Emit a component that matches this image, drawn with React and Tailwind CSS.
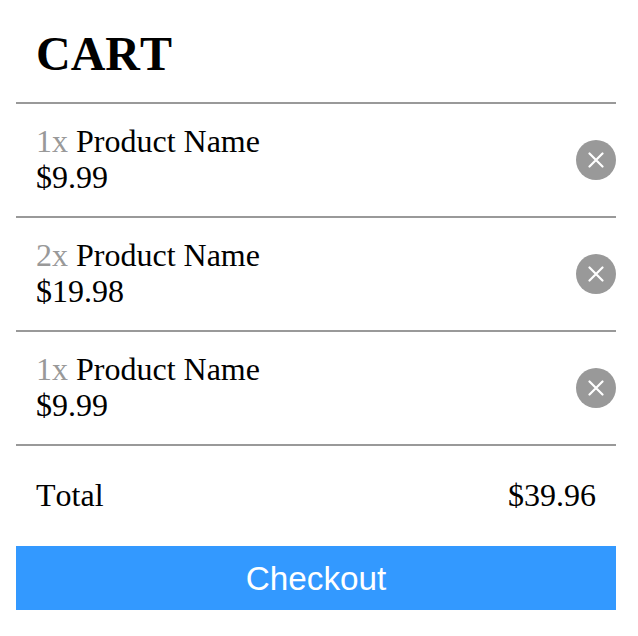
const items = [
  { qty: 1, name: "Product Name", price: "$9.99" },
  { qty: 2, name: "Product Name", price: "$19.98" },
  { qty: 1, name: "Product Name", price: "$9.99" },
];

function RemoveButton() {
  return (
    <button type="button" aria-label="Remove" className="flex size-10 items-center justify-center rounded-full bg-[#999]">
      <svg className="size-4" viewBox="0 0 16 16" fill="none" stroke="white" strokeWidth="2.2" strokeLinecap="round">
        <path d="M1.5 1.5L14.5 14.5M14.5 1.5L1.5 14.5" />
      </svg>
    </button>
  );
}

function CartItem({ item }) {
  return (
    <li className="flex h-[114px] items-center justify-between border-b-2 border-[#999] pl-5">
      <div className="pb-0.5">
        <div><span className="text-[#999]">{item.qty}x</span> {item.name}</div>
        <div>{item.price}</div>
      </div>
      <RemoveButton />
    </li>
  );
}

export default function App() {
  return (
    <main className="h-[636px] w-[638px] bg-white pl-4 font-['Liberation_Serif',serif] text-[32px] leading-9 text-black [font-kerning:none]">
      <div className="w-[600px]">
        <h1 className="h-[104px] border-b-2 border-[#999] pt-[27px] pl-5 text-[48px] leading-[54px] font-bold">CART</h1>
        <ul>
          {items.map((item, i) => <CartItem key={i} item={item} />)}
        </ul>
        <div className="flex h-[100px] items-center justify-between px-5 pb-0.5">
          <span>Total</span>
          <span>$39.96</span>
        </div>
        <button type="button" className="block h-16 w-full bg-[#3399ff] pt-0.5 font-['Liberation_Sans',sans-serif] text-[33.3px] text-white">Checkout</button>
      </div>
    </main>
  );
}
